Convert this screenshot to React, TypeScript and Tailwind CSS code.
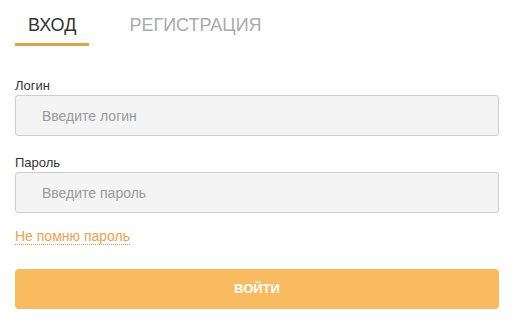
import React from "react";

export default function App() {
  return (
    <div className="w-[515px] h-[323px] bg-white px-[15px] pr-[16px] font-['Liberation_Sans',Arial,sans-serif]">
      <div className="flex gap-[27px]">
        <div className="pt-[13px] pb-[6px] px-[13px] border-b-[3px] border-[#e2a43f] text-[18px] leading-[24px] text-[#333333]">
          ВХОД
        </div>
        <div className="pt-[13px] pb-[6px] px-[13px] border-b-[3px] border-transparent text-[18px] leading-[24px] text-[#aaaaaa]">
          РЕГИСТРАЦИЯ
        </div>
      </div>

      <div className="mt-[32px]">
        <label className="block text-[13px] leading-[16px] text-[#333333] mb-[1px]">Логин</label>
        <input
          type="text"
          placeholder="Введите логин"
          className="block w-full h-[41px] rounded-[3px] border border-[#cccccc] bg-[#f4f4f4] pl-[26px] text-[14px] text-[#333] placeholder:text-[#999999] outline-none"
        />
      </div>

      <div className="mt-[19px]">
        <label className="block text-[13px] leading-[16px] text-[#333333] mb-[1px]">Пароль</label>
        <input
          type="password"
          placeholder="Введите пароль"
          className="block w-full h-[41px] rounded-[3px] border border-[#cccccc] bg-[#f4f4f4] pl-[26px] text-[14px] text-[#333] placeholder:text-[#999999] outline-none"
        />
      </div>

      <div className="mt-[16px] flex">
        <a href="#" className="block text-[14px] leading-[15px] text-[#f0a04b] border-b border-dotted border-[#e0a040]">
          Не помню пароль
        </a>
      </div>

      <button className="mt-[24px] block w-full h-[40px] rounded-[4px] bg-[#f9bb60] text-white text-[13px] font-bold">
        ВОЙТИ
      </button>
    </div>
  );
}
